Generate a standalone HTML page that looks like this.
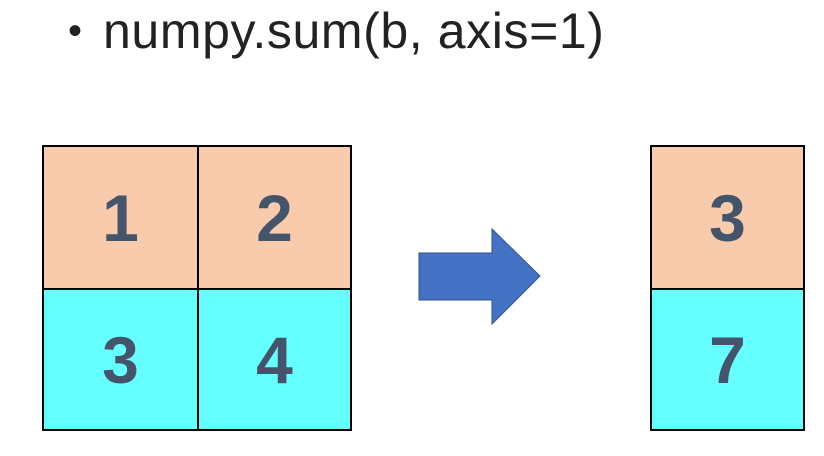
<!DOCTYPE html>
<html><head><style>
body{margin:0;width:824px;height:456px;background:#fff;position:relative;overflow:hidden;font-family:"Liberation Sans",sans-serif}
.t{position:absolute;left:103px;top:6px;line-height:50px;font-size:50px;color:#222;white-space:nowrap;letter-spacing:0.6px}
.bu{position:absolute;left:68px;top:6px;line-height:50px;font-size:40px;color:#222}
.c{position:absolute;border:2px solid #000;box-sizing:border-box;display:flex;align-items:center;justify-content:center;font-weight:bold;font-size:66px;color:#44546a}
.p{background:#f8cbad}.b{background:#66ffff}
</style></head><body>
<div class="bu">•</div>
<div class="t">numpy.sum(b, axis=1)</div>
<div class="c p" style="left:42px;top:145px;width:157px;height:145px">1</div>
<div class="c p" style="left:197px;top:145px;width:155px;height:145px">2</div>
<div class="c b" style="left:42px;top:288px;width:157px;height:143px">3</div>
<div class="c b" style="left:197px;top:288px;width:155px;height:143px">4</div>
<div class="c p" style="left:650px;top:145px;width:155px;height:145px">3</div>
<div class="c b" style="left:650px;top:288px;width:155px;height:143px">7</div>
<svg style="position:absolute;left:0;top:0" width="824" height="456"><polygon points="419,253 492,253 492,229 540,276 492,324 492,300 419,300" fill="#4472c4" stroke="#2f528f" stroke-width="1"/></svg>
</body></html>
